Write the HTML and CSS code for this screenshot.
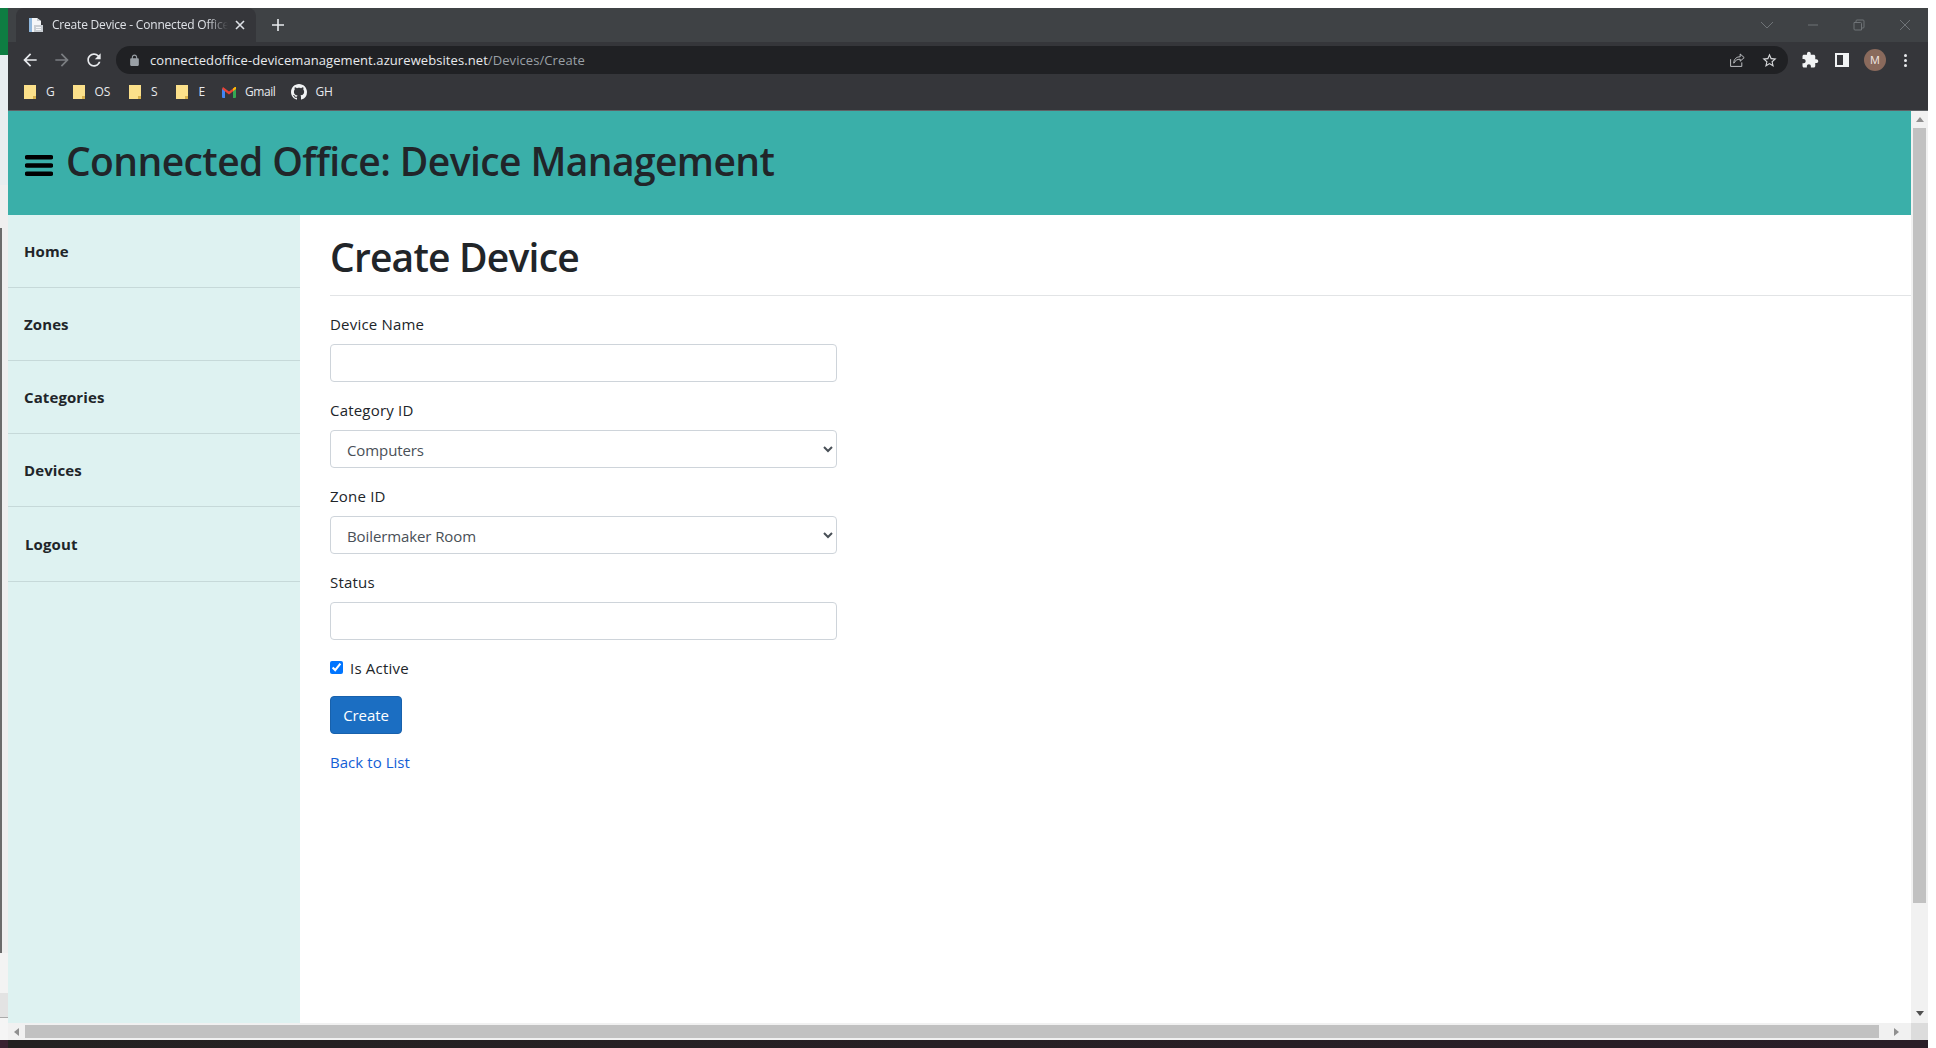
FILE: index.html
```html
<!DOCTYPE html>
<html>
<head>
<meta charset="utf-8">
<title>Create Device - Connected Office</title>
<link rel="stylesheet" href="styles.css">
</head>
<body>
<div class="desk">
  <div class="desk-top"></div>
  <div class="desk-mid">
    <div class="edge">
      <div class="edge-green"></div>
      <div class="edge-pale"></div>
      <div class="edge-grey"></div>
      <div class="edge-dark"></div>
      <div class="edge-light"></div>
      <div class="edge-panel"></div>
      <div class="edge-foot"></div>
    </div>
    <div class="window">

      <!-- browser tabs -->
      <div class="tabstrip">
        <div class="tab">
          <svg class="favicon" viewBox="0 0 16 16"><path fill="#f4f6f8" d="M1 1h8l4 3v11H1z"/><path fill="#8fb7dc" d="M1 1h3v14H1z"/><path fill="#c9ced3" d="M9 1l4 3H9zM6 8h9v7H6z"/><path fill="#f4f6f8" d="M8 10h5v1H8zM8 12h5v1H8z"/></svg>
          <span class="tab-title">Create Device - Connected Office</span>
          <svg class="tab-close" viewBox="0 0 10 10"><path d="M1 1l8 8M9 1L1 9"/></svg>
        </div>
        <svg class="tab-new" viewBox="0 0 12 12"><path d="M6 0v12M0 6h12"/></svg>
        <div class="win-btns">
          <svg class="win-ico" viewBox="0 0 12 12"><path d="M0 3l6 6 6-6"/></svg>
          <svg class="win-ico" viewBox="0 0 12 12"><path d="M1 6h10"/></svg>
          <svg class="win-ico" viewBox="0 0 12 12"><path d="M1 3.5h6.5a1 1 0 0 1 1 1V11H2a1 1 0 0 1-1-1zM3 3.500V2a1 1 0 0 1 1-1h6a1 1 0 0 1 1 1v6a1 1 0 0 1-1 1H8.500"/></svg>
          <svg class="win-ico" viewBox="0 0 12 12"><path d="M1 1l10 10M11 1L1 11"/></svg>
        </div>
      </div>

      <!-- address bar -->
      <div class="toolbar">
        <svg class="tool-ico" viewBox="0 0 24 24"><path d="M20 11H7.830l5.590-5.590L12 4l-8 8 8 8 1.410-1.410L7.830 13H20v-2z"/></svg>
        <svg class="tool-ico tool-off" viewBox="0 0 24 24"><path d="M12 4l-1.410 1.410L16.170 11H4v2h12.170l-5.580 5.590L12 20l8-8z"/></svg>
        <svg class="tool-ico" viewBox="0 0 24 24"><path d="M17.650 6.350C16.200 4.900 14.210 4 12 4c-4.420 0-7.990 3.580-7.990 8s3.570 8 7.990 8c3.730 0 6.840-2.550 7.730-6h-2.080c-.82 2.330-3.040 4-5.650 4-3.310 0-6-2.690-6-6s2.690-6 6-6c1.660 0 3.140.69 4.220 1.780L13 11h7V4l-2.350 2.350z"/></svg>
        <div class="omnibox">
          <svg class="lock" viewBox="0 0 24 24"><path d="M18 8h-1V6c0-2.760-2.240-5-5-5S7 3.240 7 6v2H6c-1.100 0-2 .9-2 2v10c0 1.100.9 2 2 2h12c1.100 0 2-.9 2-2V10c0-1.100-.9-2-2-2zM9 6c0-1.660 1.340-3 3-3s3 1.340 3 3v2H9V6z"/></svg>
          <span class="url">connectedoffice-devicemanagement.azurewebsites.net<span class="url-path">/Devices/Create</span></span>
          <svg class="omni-ico share" viewBox="0 0 20 20"><path d="M2 9v9h14v-5M6 14c0-5 3-8 8-8V2.500L19 7l-5 4.500V9c-4 0-6 1.500-8 5z"/></svg>
          <svg class="omni-star" viewBox="0 0 24 24"><path d="M22 9.240l-7.190-.62L12 2 9.190 8.630 2 9.240l5.460 4.730L5.820 21 12 17.270 18.180 21l-1.630-7.030L22 9.240zM12 15.400l-3.760 2.270 1-4.280-3.320-2.880 4.380-.38L12 6.100l1.710 4.040 4.380.38-3.320 2.880 1 4.280L12 15.400z"/></svg>
        </div>
        <svg class="tool-ico puzzle" viewBox="0 0 24 24"><path d="M20.500 11H19V7c0-1.100-.9-2-2-2h-4V3.500C13 2.120 11.880 1 10.500 1S8 2.120 8 3.500V5H4c-1.100 0-1.990.9-1.990 2v3.800H3.500c1.490 0 2.700 1.210 2.700 2.700s-1.210 2.700-2.700 2.700H2V20c0 1.100.9 2 2 2h3.800v-1.500c0-1.490 1.210-2.700 2.700-2.700 1.490 0 2.700 1.210 2.700 2.700V22H17c1.100 0 2-.9 2-2v-4h1.500c1.380 0 2.500-1.120 2.500-2.500S21.880 11 20.500 11z"/></svg>
        <div class="sidepanel"></div>
        <div class="avatar">M</div>
        <div class="dots"><i></i><i></i><i></i></div>
      </div>

      <!-- bookmarks -->
      <div class="bookmarks">
        <div class="bm bm-g"><svg class="folder" viewBox="0 0 12 14"><path class="f-a" d="M0 0h12v14H0z"/><path class="f-b" d="M9 11h3v3H9z"/></svg><span>G</span></div>
        <div class="bm bm-os"><svg class="folder" viewBox="0 0 12 14"><path class="f-a" d="M0 0h12v14H0z"/><path class="f-b" d="M9 11h3v3H9z"/></svg><span>OS</span></div>
        <div class="bm bm-s"><svg class="folder" viewBox="0 0 12 14"><path class="f-a" d="M0 0h12v14H0z"/><path class="f-b" d="M9 11h3v3H9z"/></svg><span>S</span></div>
        <div class="bm bm-e"><svg class="folder" viewBox="0 0 12 14"><path class="f-a" d="M0 0h12v14H0z"/><path class="f-b" d="M9 11h3v3H9z"/></svg><span>E</span></div>
        <div class="bm bm-gmail">
          <svg class="gmail" viewBox="0 0 14 11"><path fill="#4285f4" d="M0 2h3v9H1a1 1 0 0 1-1-1z"/><path fill="#34a853" d="M11 2h3v8a1 1 0 0 1-1 1h-2z"/><path fill="#ea4335" d="M0 2l1-2 6 4.500L13 0l1 2-7 5.500z"/><path fill="#fbbc04" d="M11 4l3-2V0h-1l-2 1.500z"/></svg>
          <span>Gmail</span>
        </div>
        <div class="bm bm-gh">
          <svg class="octo" viewBox="0 0 16 16"><path d="M8 0C3.580 0 0 3.580 0 8c0 3.540 2.290 6.530 5.470 7.590.4.070.55-.17.55-.38 0-.19-.01-.82-.01-1.490-2.010.37-2.530-.49-2.690-.94-.09-.23-.48-.94-.82-1.130-.28-.15-.68-.52-.01-.53.63-.01 1.080.58 1.230.82.720 1.210 1.870.87 2.330.66.070-.52.280-.87.510-1.070-1.780-.2-3.640-.89-3.640-3.950 0-.87.310-1.590.82-2.150-.08-.2-.36-1.020.08-2.120 0 0 .67-.21 2.200.82.640-.18 1.320-.27 2-.27s1.360.09 2 .27c1.530-1.040 2.200-.82 2.200-.82.440 1.100.16 1.920.08 2.120.51.56.82 1.270.82 2.150 0 3.070-1.870 3.750-3.650 3.950.29.25.54.73.54 1.480 0 1.070-.01 1.930-.01 2.200 0 .21.15.46.55.38A8.010 8.010 0 0 0 16 8c0-4.420-3.580-8-8-8z"/></svg>
          <span>GH</span>
        </div>
      </div>

      <!-- the page itself -->
      <div class="viewport">
        <div class="viewport-row">
          <div class="page">
            <header class="topbar">
              <svg class="bars" viewBox="0 0 28 21"><path d="M2 0h24a2 2 0 0 1 0 4.500H2a2 2 0 0 1 0-4.500zM2 8.250h24a2 2 0 0 1 0 4.500H2a2 2 0 0 1 0-4.500zM2 16.500h24a2 2 0 0 1 0 4.500H2a2 2 0 0 1 0-4.500z"/></svg>
              <span class="brand">Connected Office: Device Management</span>
            </header>
            <div class="page-body">
              <nav class="sidebar">
                <a class="nav-item" href="#">Home</a>
                <a class="nav-item" href="#">Zones</a>
                <a class="nav-item" href="#">Categories</a>
                <a class="nav-item" href="#">Devices</a>
                <a class="nav-item nav-logout" href="#">Logout</a>
              </nav>
              <main class="content">
                <h1 class="page-title">Create Device</h1>
                <hr class="rule">
                <form class="form">
                  <div class="field">
                    <label class="field-label">Device Name</label>
                    <input class="control" type="text">
                  </div>
                  <div class="field">
                    <label class="field-label">Category ID</label>
                    <select class="control control-select"><option>Computers</option></select>
                  </div>
                  <div class="field">
                    <label class="field-label">Zone ID</label>
                    <select class="control control-select"><option>Boilermaker Room</option></select>
                  </div>
                  <div class="field">
                    <label class="field-label">Status</label>
                    <input class="control" type="text">
                  </div>
                  <div class="field field-check">
                    <input class="check" type="checkbox" checked>
                    <label class="field-label">Is Active</label>
                  </div>
                  <div class="field">
                    <button class="btn" type="button">Create</button>
                  </div>
                </form>
                <a class="back" href="#">Back to List</a>
              </main>
            </div>
          </div>
          <div class="vscroll">
            <svg class="arrow" viewBox="0 0 8 5"><path d="M4 0l4 5H0z"/></svg>
            <div class="vthumb"></div>
            <svg class="arrow arrow-dark" viewBox="0 0 8 5"><path d="M0 0h8L4 5z"/></svg>
          </div>
        </div>
        <div class="hscroll">
          <div class="hscroll-track">
            <svg class="arrow-h" viewBox="0 0 5 8"><path d="M5 0v8L0 4z"/></svg>
            <div class="hthumb"></div>
            <svg class="arrow-h arrow-dark" viewBox="0 0 5 8"><path d="M0 0l5 4-5 4z"/></svg>
          </div>
          <div class="corner"></div>
        </div>
      </div>
    </div>
  </div>
  <div class="desk-bottom"></div>
</div>
</body>
</html>
```

FILE: styles.css
```css
* { box-sizing: border-box; }
html, body { margin: 0; height: 100%; overflow: hidden; }
body { background: #fff; color: #212529; font-family: "Open Sans", "Noto Sans", sans-serif; font-size: 16px; line-height: 24px; }

.desk { width: 1928px; height: 1048px; display: flex; flex-direction: column; margin-right: 8px; }
.desk-top { height: 8px; background: #fff; }
.desk-mid { height: 1032px; display: flex; }
.desk-bottom { height: 8px; background: linear-gradient(to right, #3a2030 8px, #242121 8px, #2a1d27); }

.edge { width: 8px; display: flex; flex-direction: column; background: #f5f5f5; }
.edge-green { height: 47px; background: #0e7d42; }
.edge-pale { height: 130px; background: #e8eef0; }
.edge-grey { height: 43px; background: #efefef; }
.edge-dark { height: 725px; background: #efefef; border-left: 2px solid #6b6b6b; }
.edge-light { height: 40px; background: #f3f3f3; }
.edge-panel { height: 25px; background: #e3e3e3; border-bottom: 1px solid #aaa; }
.edge-foot { flex: 1; }

.window { width: 1920px; display: flex; flex-direction: column; }

/* browser chrome */
.tabstrip { height: 34px; background: #3f4245; display: flex; align-items: flex-end; padding-left: 8px; }
.tab { width: 240px; height: 34px; background: #35363a; border-radius: 8px 8px 0 0; display: flex; align-items: center; padding-left: 12px; }
.favicon { width: 16px; height: 16px; flex: none; }
.tab-title { width: 176px; margin-left: 8px; font-size: 12px; color: #dee1e6; white-space: nowrap; overflow: hidden; letter-spacing: -0.2px; -webkit-mask-image: linear-gradient(to right, #000 88%, transparent); mask-image: linear-gradient(to right, #000 88%, transparent); }
.tab-close { width: 10px; height: 10px; margin-left: 7px; fill: none; stroke: #dee1e6; stroke-width: 1.6; }
.tab-new { width: 12px; height: 12px; margin: 0 0 11px 16px; fill: none; stroke: #e8eaed; stroke-width: 1.6; }
.win-btns { margin-left: auto; height: 34px; display: flex; align-items: center; gap: 34px; padding-right: 17px; }
.win-ico { width: 12px; height: 12px; fill: none; stroke: #6f7377; stroke-width: 1; }

.toolbar { height: 36px; background: #35363a; display: flex; align-items: center; padding-left: 12px; }
.tool-ico { width: 20px; height: 20px; fill: #e8eaed; margin-right: 12px; flex: none; }
.tool-off { fill: #7b7e82; }
.omnibox { width: 1672px; height: 28px; margin: 0 13px 0 0; background: #202124; border-radius: 14px; display: flex; align-items: center; padding: 0 10px 0 12px; flex: none; }
.lock { width: 13px; height: 13px; fill: #9aa0a6; flex: none; }
.url { margin-left: 9px; font-size: 13px; color: #e8eaed; white-space: nowrap; letter-spacing: 0.08px; }
.url-path { color: #9aa0a6; }
.omni-ico { width: 16px; height: 16px; margin-left: auto; fill: none; stroke: #c4c7ca; stroke-width: 1.2; }
.omni-star { width: 17px; height: 17px; margin-left: 16px; fill: #d5d7d9; }
.puzzle { width: 18px; height: 18px; margin-right: 16px; fill: #f1f3f4; }
.sidepanel { width: 14px; height: 14px; border: 2px solid #f1f3f4; border-right-width: 6px; background: #35363a; flex: none; }
.avatar { width: 22px; height: 22px; margin-left: 15px; border-radius: 50%; background: #8a6a5c; color: #f2e9e4; font-size: 11px; line-height: 22px; text-align: center; flex: none; }
.dots { margin-left: 18px; display: flex; flex-direction: column; gap: 2px; }
.dots i { width: 3px; height: 3px; background: #e8eaed; border-radius: 50%; display: block; }

.bookmarks { height: 33px; background: #35363a; border-bottom: 1px solid #5f6266; display: flex; align-items: center; padding: 0 0 4px 16px; font-size: 12px; color: #e8eaed; }
.bm { display: flex; align-items: center; gap: 10px; letter-spacing: -0.2px; }
.folder { width: 12px; height: 14px; flex: none; }
.f-a { fill: #fbe08a; }
.f-b { fill: #d9b24c; }
.bm-os { margin-left: 18px; }
.bm-s { margin-left: 19px; }
.bm-e { margin-left: 19px; }
.bm-gmail { margin-left: 17px; gap: 9px; letter-spacing: -0.4px; }
.gmail { width: 14px; height: 11px; flex: none; }
.bm-gh { margin-left: 16px; gap: 8px; }
.octo { width: 16px; height: 16px; fill: #f1f3f4; flex: none; }

/* page */
.viewport { height: 929px; display: flex; flex-direction: column; }
.viewport-row { height: 912px; display: flex; }
.page { width: 1903px; display: flex; flex-direction: column; background: #fff; }

.topbar { height: 104px; background: #3aafa9; display: flex; align-items: center; padding: 0 0 0 17px; }
.bars { width: 28px; height: 21px; margin: 4px 13px 0 0; fill: #000; flex: none; }
.brand { font-size: 39px; font-weight: 600; color: #212529; line-height: 48px; letter-spacing: -0.6px; white-space: nowrap; margin-top: -4px; }

.page-body { height: 808px; display: flex; }
.sidebar { width: 292px; background: #def2f1; flex: none; }
.nav-item { display: block; padding: 24px 16px; border-bottom: 1px solid #c6d9d9; color: #212529; font-size: 15px; font-weight: 700; text-decoration: none; letter-spacing: 0.1px; }
.nav-logout { padding: 25px 17px; }

.content { flex: 1; padding-left: 30px; }
.page-title { margin: 0; padding-top: 18px; font-size: 39px; line-height: 48px; font-weight: 600; letter-spacing: -0.8px; }
.rule { margin: 14px 0 0; border: 0; border-top: 1px solid #e2e4e6; }
.form { width: 507px; padding-top: 16px; }
.field { margin-bottom: 16px; }
.field-label { display: block; height: 24px; margin-bottom: 8px; font-size: 15px; letter-spacing: 0.2px; }
.control { display: block; width: 100%; height: 38px; padding: 6px 12px; background: #fff; border: 1px solid #ced4da; border-radius: 4px; color: #495057; font-family: inherit; font-size: 15px; letter-spacing: -0.1px; }
.control-select { padding-top: 7px; padding-bottom: 5px; }
.field-check { display: flex; align-items: center; height: 24px; }
.field-check .field-label { margin: 0 0 0 7px; }
.check { width: 13px; height: 13px; margin: -1px 0 0; }
.btn { height: 38px; width: 72px; padding: 0; background: #1b6ec2; border: 1px solid #1861ac; border-radius: 4px; color: #fff; font-family: inherit; font-size: 15px; letter-spacing: -0.1px; }
.back { color: #1360d6; font-size: 15px; text-decoration: none; letter-spacing: 0.05px; }

/* scrollbars */
.vscroll { width: 17px; background: #f1f1f1; display: flex; flex-direction: column; align-items: center; padding-top: 6px; }
.arrow { width: 8px; height: 5px; fill: #8f8f8f; flex: none; }
.arrow-dark { fill: #505050; }
.vthumb { width: 13px; height: 775px; margin: 6px 0 108px; background: #c1c1c1; }
.hscroll { height: 17px; display: flex; background: #f1f1f1; }
.hscroll-track { width: 1903px; display: flex; align-items: center; padding-left: 6px; }
.arrow-h { width: 5px; height: 8px; fill: #8f8f8f; flex: none; }
.hthumb { width: 1854px; height: 13px; margin: 0 15px 0 6px; background: #c1c1c1; }
.corner { width: 17px; background: #dcdcdc; }
```
